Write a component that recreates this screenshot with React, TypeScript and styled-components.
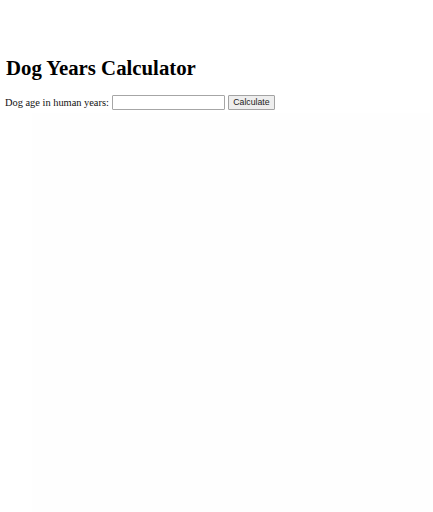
import React from "react";
import styled, { createGlobalStyle } from "styled-components";

const Global = createGlobalStyle`
  html, body {
    margin: 0;
    padding: 0;
    background: #ffffff;
  }
  body {
    font-family: "Liberation Serif", "Times New Roman", serif;
    color: #000;
  }
`;

const Page = styled.div`
  padding: 0 0 0 5px;
  display: flex;
  flex-direction: column;
  min-height: 512px;
  box-sizing: border-box;
`;

const Title = styled.h1`
  font-family: "Liberation Serif", "Times New Roman", serif;
  font-weight: bold;
  font-size: 20.8px;
  line-height: 23px;
  margin: 55.5px 0 16px 1px;
  color: #000;
`;

const Row = styled.form`
  display: flex;
  align-items: center;
  height: 15px;
  margin: 0;
`;

const Label = styled.label`
  font-family: "Liberation Serif", "Times New Roman", serif;
  font-size: 10.4px;
  line-height: 12px;
  padding-top: 2px;
  color: #111;
  margin-right: 3px;
`;

const Input = styled.input`
  box-sizing: border-box;
  width: 113px;
  height: 15px;
  border: 1px solid #a6a6a6;
  border-radius: 1px;
  padding: 0 2px;
  margin: 0 3px 0 0;
  font-size: 8.7px;
  background: #fff;
  outline: none;
`;

const Button = styled.button`
  box-sizing: border-box;
  height: 15px;
  width: 47px;
  padding: 0;
  margin: 0;
  border: 1px solid #a3a3a3;
  border-radius: 1px;
  background: #eeeeee;
  color: #222;
  font-family: "Liberation Sans", Arial, sans-serif;
  font-size: 8.7px;
  line-height: 13px;
  cursor: pointer;
`;

const Result = styled.div`
  margin: 3px 3px 0 27px;
  flex: 1;
  background: #fefefe;
`;

export default function App() {
  return (
    <>
      <Global />
      <Page>
        <Title>Dog Years Calculator</Title>
        <Row onSubmit={(e) => e.preventDefault()}>
          <Label htmlFor="age">Dog age in human years:</Label>
          <Input id="age" type="text" />
          <Button type="submit">Calculate</Button>
        </Row>
        <Result />
      </Page>
    </>
  );
}
